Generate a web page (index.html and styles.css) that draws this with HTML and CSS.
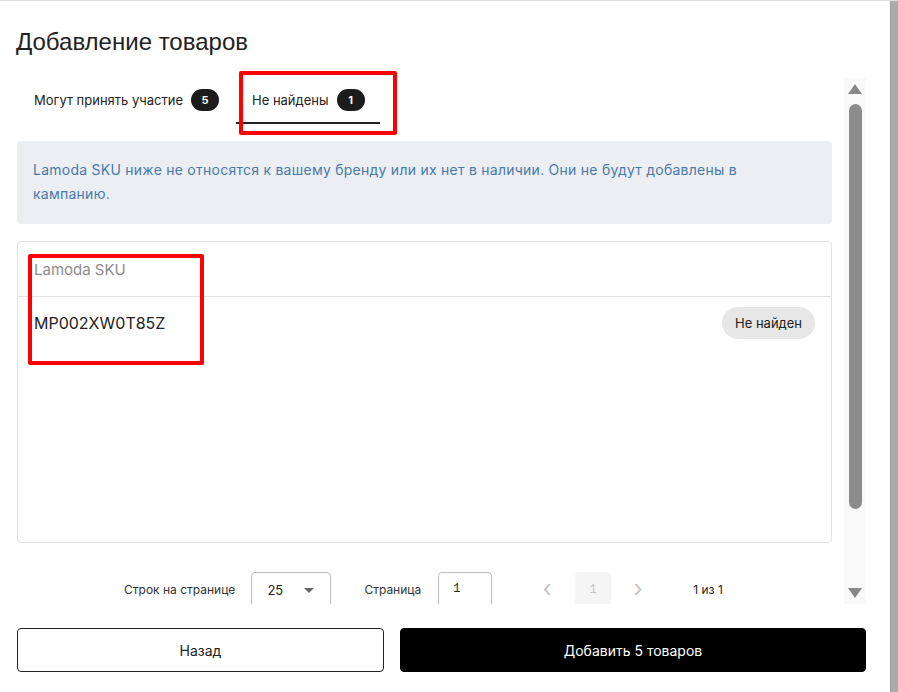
FILE: index.html
```html
<!DOCTYPE html>
<html lang="ru">
<head>
    <meta charset="UTF-8">
    <title>Добавление товаров</title>
    <link rel="stylesheet" href="styles.css">
</head>
<body>
    <div class="page">
        <div class="modal">
            <h1 class="title">Добавление товаров</h1>

            <div class="scroll">
                <div class="content">
                    <!--вкладки-->
                    <div class="tabs">
                        <div class="tab">Могут принять участие <span class="count">5</span></div>
                        <div class="tab current">Не найдены <span class="count">1</span></div>
                    </div>

                    <div class="info">
                        Lamoda SKU ниже не относятся к вашему бренду или их нет в наличии. Они не будут добавлены в кампанию.
                    </div>

                    <div class="table">
                        <div class="table-head">Lamoda SKU</div>
                        <div class="table-row">
                            <span class="sku">MP002XW0T85Z</span>
                            <span class="status">Не найден</span>
                        </div>
                    </div>

                    <!--пагинация-->
                    <div class="pager">
                        <span class="pager-label">Строк на странице</span>
                        <div class="select">
                            <span>25</span>
                            <span class="caret"></span>
                        </div>
                        <span class="pager-label page-label">Страница</span>
                        <div class="page-input">1</div>
                        <span class="nav prev">&lsaquo;</span>
                        <span class="page-num">1</span>
                        <span class="nav next">&rsaquo;</span>
                        <span class="total">1 из 1</span>
                    </div>
                </div>

                <div class="bar">
                    <span class="arrow up"></span>
                    <span class="thumb"></span>
                    <span class="arrow down"></span>
                </div>
            </div>

            <div class="actions">
                <button class="btn back">Назад</button>
                <button class="btn add">Добавить 5 товаров</button>
            </div>

            <!--красные рамки-->
            <div class="mark mark-tab"></div>
            <div class="mark mark-sku"></div>
        </div>
        <div class="side"></div>
    </div>
</body>
</html>
```

FILE: styles.css
```css
body, h1, div {
    margin: 0;
    padding: 0;
}

body {
    font-family: Inter, "Liberation Sans", Arial, sans-serif;
    color: #222;
    background: #fff;
}

.page {
    display: flex;
    width: 898px;
    height: 692px;
    border-top: 1px solid #dedede;
    box-sizing: border-box;
    overflow: hidden;
}

.modal {
    position: relative;
    width: 891px;
    height: 691px;
    padding: 27px 0 0 17px;
    box-sizing: border-box;
    background: #fff;
    border-top-right-radius: 6px;
}

.side {
    width: 7px;
    background: #ababab;
    border-left: 1px solid #9c9c9c;
}

.title {
    font-family: "Liberation Sans", Arial, sans-serif;
    font-weight: normal;
    font-size: 24px;
    line-height: 28px;
    margin-left: -1px;
    color: #222;
}

.scroll {
    display: flex;
    height: 526px;
    margin-top: 22px;
}

.content {
    width: 815px;
    overflow: hidden;
}

.tabs {
    display: flex;
    gap: 2px;
    height: 46px;
}

.tab {
    display: flex;
    align-items: center;
    gap: 8px;
    padding: 0 15px 0 17px;
    font-size: 13px;
    color: #222;
    border-bottom: 2px solid transparent;
}

.tab.current {
    border-bottom-color: #222;
    padding-left: 16px;
}

.count {
    display: inline-block;
    min-width: 28px;
    height: 22px;
    line-height: 22px;
    border-radius: 11px;
    background: #1c1c1c;
    color: #fff;
    font-size: 11px;
    font-weight: bold;
    text-align: center;
}

.info {
    margin-top: 17px;
    padding: 17px 16px 18px;
    background: #ebeff3;
    border-radius: 4px;
    color: #4a79a9;
    font-size: 14px;
    letter-spacing: 0.25px;
    line-height: 24px;
}

.table {
    margin-top: 17px;
    height: 302px;
    border: 1px solid #e2e2e2;
    border-radius: 4px;
    box-sizing: border-box;
}

.table-head {
    height: 55px;
    line-height: 55px;
    padding-left: 16px;
    font-size: 15px;
    color: #8c8c8c;
    border-bottom: 1px solid #e2e2e2;
    box-sizing: border-box;
    padding-bottom: 2px;
}

.table-row {
    display: flex;
    align-items: center;
    justify-content: space-between;
    height: 52px;
    padding: 0 16px;
}

.sku {
    font-size: 16px;
    color: #222;
}

.status {
    height: 32px;
    line-height: 32px;
    padding: 0 13px;
    border-radius: 16px;
    background: #e7e7e7;
    font-size: 13px;
    color: #222;
}

.pager {
    display: flex;
    align-items: flex-start;
    margin-top: 29px;
    padding-left: 107px;
    height: 32px;
    overflow: hidden;
    font-size: 12px;
}

.pager-label {
    line-height: 36px;
    color: #333;
}

.select {
    display: flex;
    align-items: center;
    justify-content: space-between;
    width: 80px;
    height: 40px;
    margin-left: 16px;
    padding: 0 16px 4px 15px;
    border: 1px solid #bdbdbd;
    border-radius: 4px;
    box-sizing: border-box;
    font-size: 13px;
}

.caret {
    width: 0;
    height: 0;
    border-left: 5px solid transparent;
    border-right: 5px solid transparent;
    border-top: 5px solid #666;
}

.page-label {
    margin-left: 33px;
}

.page-input {
    width: 54px;
    height: 40px;
    margin-left: 17px;
    padding: 9px 14px;
    border: 1px solid #bdbdbd;
    border-radius: 4px;
    box-sizing: border-box;
    font-family: "Liberation Mono", monospace;
    font-size: 12px;
}

.nav {
    width: 32px;
    line-height: 34px;
    text-align: center;
    color: #c4c4c4;
    font-size: 24px;
}

.prev {
    margin-left: 39px;
}

.page-num {
    width: 36px;
    height: 40px;
    margin: 0 11px 0 12px;
    line-height: 36px;
    text-align: center;
    background: #f5f5f5;
    border-radius: 4px;
    color: #c4c4c4;
    font-family: "Liberation Mono", monospace;
    font-size: 12px;
}

.total {
    margin-left: 39px;
    line-height: 36px;
    font-size: 12px;
    color: #222;
}

.bar {
    display: flex;
    flex-direction: column;
    align-items: center;
    width: 22px;
    margin-left: 12px;
    background: #f9f9f9;
    padding: 6px 0;
    box-sizing: border-box;
}

.arrow {
    width: 0;
    height: 0;
    border-left: 7px solid transparent;
    border-right: 7px solid transparent;
}

.arrow.up {
    border-bottom: 10px solid #888;
}

.arrow.down {
    border-top: 10px solid #888;
}

.thumb {
    width: 13px;
    height: 405px;
    margin: 10px 0 auto;
    background: #8c8c8c;
    border-radius: 7px;
}

.actions {
    display: flex;
    gap: 16px;
    margin-top: 24px;
}

.btn {
    height: 44px;
    border-radius: 4px;
    font-family: Inter, "Liberation Sans", Arial, sans-serif;
    font-size: 14px;
    cursor: pointer;
}

.back {
    width: 367px;
    background: #fff;
    border: 1px solid #222;
    color: #222;
}

.add {
    width: 466px;
    background: #000;
    border: 1px solid #000;
    color: #fff;
}

.mark {
    position: absolute;
    border: 4px solid #ff0000;
    border-radius: 2px;
    box-sizing: border-box;
}

.mark-tab {
    left: 239px;
    top: 70px;
    width: 158px;
    height: 64px;
}

.mark-sku {
    left: 28px;
    top: 253px;
    width: 176px;
    height: 111px;
}
```
